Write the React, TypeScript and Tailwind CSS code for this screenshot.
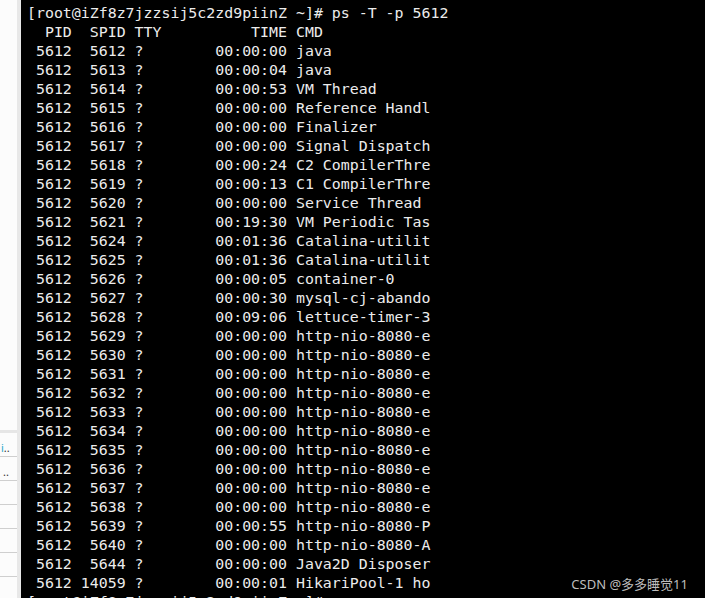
const rows: [string, string, string][] = [
  ['5612', '00:00:00', 'java'],
  ['5613', '00:00:04', 'java'],
  ['5614', '00:00:53', 'VM Thread'],
  ['5615', '00:00:00', 'Reference Handl'],
  ['5616', '00:00:00', 'Finalizer'],
  ['5617', '00:00:00', 'Signal Dispatch'],
  ['5618', '00:00:24', 'C2 CompilerThre'],
  ['5619', '00:00:13', 'C1 CompilerThre'],
  ['5620', '00:00:00', 'Service Thread'],
  ['5621', '00:19:30', 'VM Periodic Tas'],
  ['5624', '00:01:36', 'Catalina-utilit'],
  ['5625', '00:01:36', 'Catalina-utilit'],
  ['5626', '00:00:05', 'container-0'],
  ['5627', '00:00:30', 'mysql-cj-abando'],
  ['5628', '00:09:06', 'lettuce-timer-3'],
  ['5629', '00:00:00', 'http-nio-8080-e'],
  ['5630', '00:00:00', 'http-nio-8080-e'],
  ['5631', '00:00:00', 'http-nio-8080-e'],
  ['5632', '00:00:00', 'http-nio-8080-e'],
  ['5633', '00:00:00', 'http-nio-8080-e'],
  ['5634', '00:00:00', 'http-nio-8080-e'],
  ['5635', '00:00:00', 'http-nio-8080-e'],
  ['5636', '00:00:00', 'http-nio-8080-e'],
  ['5637', '00:00:00', 'http-nio-8080-e'],
  ['5638', '00:00:00', 'http-nio-8080-e'],
  ['5639', '00:00:55', 'http-nio-8080-P'],
  ['5640', '00:00:00', 'http-nio-8080-A'],
  ['5644', '00:00:00', 'Java2D Disposer'],
  ['14059', '00:00:01', 'HikariPool-1 ho'],
];

const prompt = '[root@iZf8z7jzzsij5c2zd9piinZ ~]#';

export default function App() {
  const lines = [
    `${prompt} ps -T -p 5612`,
    '  PID  SPID TTY          TIME CMD',
    ...rows.map(([spid, time, cmd]) => ` 5612 ${spid.padStart(5, ' ')} ?        ${time} ${cmd}`),
    `${prompt} `,
  ];

  return (
    <div className="flex h-[598px] w-[705px] overflow-hidden bg-black">
      {/* side panel of the host window */}
      <div className="flex w-[17px] shrink-0 flex-col bg-[#fcfcfc] font-['Noto_Sans',sans-serif] text-[11px] leading-none text-[#333]">
        <div className="h-[430px]" />
        <div className="h-[3px] bg-[#e6e6e6]" />
        <div className="flex h-[24px] items-center border-b border-[#cfcfcf] pl-[1px] pt-[6px]">
          <span className="text-[#2aa7c9]">i</span>
          <span>..</span>
        </div>
        <div className="flex h-[24px] items-center border-b border-[#cfcfcf] pl-[3px] pt-[6px]">..</div>
        <div className="h-[24px] border-b border-[#cfcfcf]" />
        <div className="h-[24px] border-b border-[#cfcfcf]" />
        <div className="h-[24px] border-b border-[#cfcfcf]" />
        <div className="h-[24px] border-b border-[#cfcfcf]" />
      </div>
      <div className="w-[4px] shrink-0 bg-[#e8e8e8]" />

      {/* terminal */}
      <div className="relative flex-1 overflow-hidden bg-black pl-[6px] pt-[4px]">
        <pre className="m-0 font-['DejaVu_Sans_Mono',monospace] text-[14.9px] leading-[19px] text-[#ececec]">
          {lines.join('\n')}
        </pre>
        <div className="absolute bottom-[7px] right-[17px] font-['Noto_Sans','Noto_Sans_CJK_SC',sans-serif] text-[13px] leading-none text-[#bdbdbd]">
          CSDN @多多睡觉11
        </div>
      </div>
    </div>
  );
}
